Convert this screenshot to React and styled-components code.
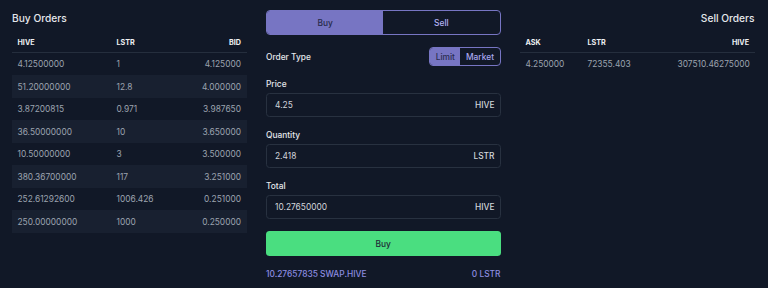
import styled, { createGlobalStyle } from "styled-components";

const buyOrders = [
    ["4.12500000", "1", "4.125000"],
    ["51.20000000", "12.8", "4.000000"],
    ["3.87200815", "0.971", "3.987650"],
    ["36.50000000", "10", "3.650000"],
    ["10.50000000", "3", "3.500000"],
    ["380.36700000", "117", "3.251000"],
    ["252.61292600", "1006.426", "0.251000"],
    ["250.00000000", "1000", "0.250000"],
];

const sellOrders = [["4.250000", "72355.403", "307510.46275000"]];

export default function App() {
    return (
        <>
            <GlobalStyle />
            <Page>
                <Panel>
                    <Title>Buy Orders</Title>
                    <OrderTable cols="99px 68px 1fr" head={["HIVE", "LSTR", "BID"]} rows={buyOrders} />
                </Panel>

                <Form>
                    <Segmented>
                        <SegButton $active>Buy</SegButton>
                        <SegButton>Sell</SegButton>
                    </Segmented>
                    <TypeRow>
                        <Label>Order Type</Label>
                        <SmallToggle>
                            <ToggleButton $active>Limit</ToggleButton>
                            <ToggleButton>Market</ToggleButton>
                        </SmallToggle>
                    </TypeRow>
                    <Field>
                        <Label>Price</Label>
                        <InputBox>
                            <input readOnly value="4.25" />
                            <span>HIVE</span>
                        </InputBox>
                    </Field>
                    <Field>
                        <Label>Quantity</Label>
                        <InputBox>
                            <input readOnly value="2.418" />
                            <span>LSTR</span>
                        </InputBox>
                    </Field>
                    <Field>
                        <Label>Total</Label>
                        <InputBox>
                            <input readOnly value="10.27650000" />
                            <span>HIVE</span>
                        </InputBox>
                    </Field>
                    <SubmitButton>Buy</SubmitButton>
                    <Balances>
                        <span>10.27657835 SWAP.HIVE</span>
                        <span>0 LSTR</span>
                    </Balances>
                </Form>

                <Panel>
                    <Title $right>Sell Orders</Title>
                    <OrderTable cols="62px 90px 1fr" head={["ASK", "LSTR", "HIVE"]} rows={sellOrders} />
                </Panel>
            </Page>
        </>
    );
}

function OrderTable({ cols, head, rows }) {
    return (
        <div>
            <HeadRow $cols={cols}>
                {head.map((h, i) => (
                    <Cell key={h} $right={i === 2}>{h}</Cell>
                ))}
            </HeadRow>
            {rows.map((r, i) => (
                <Row key={i} $cols={cols}>
                    {r.map((c, j) => (
                        <Cell key={j} $right={j === 2}>{c}</Cell>
                    ))}
                </Row>
            ))}
        </div>
    );
}

const GlobalStyle = createGlobalStyle`
    body{
        margin: 0;
        background-color: #111827;
        font-family: Inter, "Noto Sans", sans-serif;
        color: #e5e7eb;
    }
`;

const Page = styled.div`
    display: grid;
    grid-template-columns: repeat(3, 234.5px);
    column-gap: 19.5px;
    padding: 10px 0 0 12px;
    height: 288px;
    box-sizing: border-box;
`;

const Panel = styled.div`
    display: flex;
    flex-direction: column;
`;

const Title = styled.div`
    font-size: 10.2px;
    font-weight: 500;
    line-height: 16px;
    margin-bottom: 6.6px;
    color: #e5e7eb;
    text-align: ${(p) => (p.$right ? "right" : "left")};
`;

const HeadRow = styled.div`
    display: grid;
    grid-template-columns: ${(p) => p.$cols};
    align-items: center;
    height: 19.4px;
    border-bottom: 1px solid #252e3d;
    font-size: 7.2px;
    font-weight: 700;
    color: #eef0f3;
`;

const Row = styled.div`
    display: grid;
    grid-template-columns: ${(p) => p.$cols};
    align-items: center;
    height: 22.5px;
    font-size: 8.4px;
    color: #9ca3af;
    &:nth-child(odd){
        background-color: #182030;
    }
`;

const Cell = styled.div`
    padding: 0 5.5px;
    text-align: ${(p) => (p.$right ? "right" : "left")};
    white-space: nowrap;
`;

const Form = styled.div`
    display: flex;
    flex-direction: column;
    gap: 12px;
    padding-top: 0.3px;
`;

const Segmented = styled.div`
    display: flex;
    height: 24.7px;
    border: 1px solid #7775c3;
    border-radius: 4px;
    overflow: hidden;
    box-sizing: border-box;
`;

const SegButton = styled.div`
    flex: 1;
    display: flex;
    align-items: center;
    justify-content: center;
    font-size: 8.4px;
    font-weight: 500;
    background-color: ${(p) => (p.$active ? "#7775c3" : "transparent")};
    color: ${(p) => (p.$active ? "#262a4a" : "#b3b1f3")};
`;

const TypeRow = styled.div`
    display: flex;
    justify-content: space-between;
    align-items: center;
    height: 19.4px;
`;

const Label = styled.div`
    font-size: 8.4px;
    font-weight: 500;
    line-height: 12px;
    color: #e5e7eb;
`;

const SmallToggle = styled.div`
    display: flex;
    height: 19.4px;
    border: 1px solid #7775c3;
    border-radius: 4px;
    overflow: hidden;
    box-sizing: border-box;
`;

const ToggleButton = styled.div`
    display: flex;
    align-items: center;
    padding: 0 5.5px;
    font-size: 8.4px;
    font-weight: 500;
    background-color: ${(p) => (p.$active ? "#7775c3" : "transparent")};
    color: ${(p) => (p.$active ? "#2a2d50" : "#a9a7ef")};
`;

const Field = styled.div`
    display: flex;
    flex-direction: column;
    gap: 3px;
`;

const InputBox = styled.div`
    display: flex;
    align-items: center;
    height: 24px;
    padding: 0 5px 0 8px;
    border: 1px solid #283140;
    border-radius: 3.5px;
    box-sizing: border-box;
    input{
        flex: 1;
        min-width: 0;
        background: transparent;
        border: none;
        outline: none;
        padding: 0;
        font-family: inherit;
        font-size: 8.4px;
        color: #d1d5db;
    }
    span{
        font-size: 8.4px;
        font-weight: 500;
        color: #d1d5db;
    }
`;

const SubmitButton = styled.div`
    display: flex;
    align-items: center;
    justify-content: center;
    height: 24.4px;
    border-radius: 3.5px;
    background-color: #4ade80;
    color: #1f2937;
    font-size: 8.4px;
    font-weight: 500;
`;

const Balances = styled.div`
    display: flex;
    justify-content: space-between;
    line-height: 12px;
    font-size: 8.4px;
    font-weight: 500;
    color: #8c8de0;
`;
